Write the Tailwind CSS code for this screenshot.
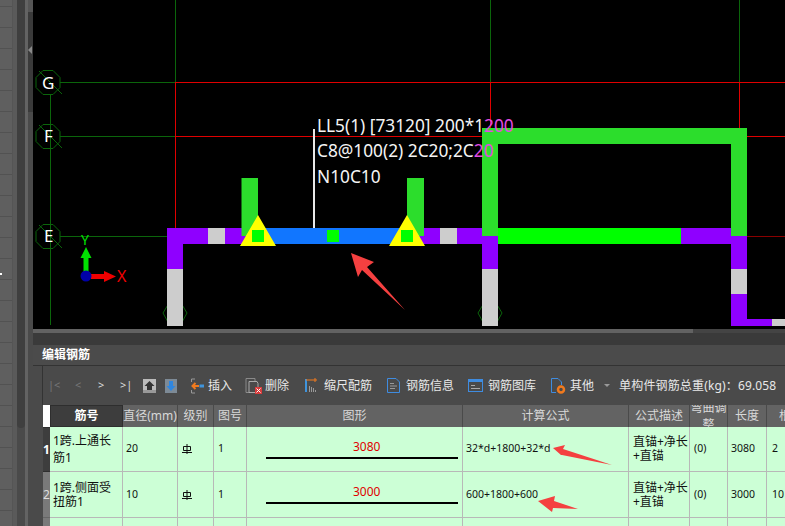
<!DOCTYPE html>
<html lang="en">

<head>
    <meta charset="UTF-8">
    <title>编辑钢筋</title>
    <script src="https://cdn.jsdelivr.net/npm/@tailwindcss/browser@4"></script>
</head>

<body class="bg-[#4a4a4a]">

    <div class="relative flex w-[785px] h-[526px] overflow-hidden font-['Noto_Sans','Noto_Sans_CJK_SC',sans-serif]">

        <!-- left dock -->
        <div class="flex w-[33px] shrink-0 h-full">
            <div class="relative w-[12px] bg-[#5f5f5f] bg-[linear-gradient(to_top,#525252_1px,transparent_1px)] bg-[size:100%_21px] bg-[position:0_7px]">
                <div class="absolute left-0 top-[273px] w-[2px] h-[2px] bg-white"></div>
            </div>
            <div class="w-[5px] bg-[#5a5a5a] border-l border-[#555]"></div>
            <div class="w-[8px] bg-[#4a4a4a]">
                <div class="h-[428px] rounded-b-[4px] bg-[#3f3f3f]"></div>
            </div>
            <div class="w-[3px] bg-[#636363]"></div>
            <div class="w-[5px] bg-[#4a4a4a] flex flex-col">
                <div class="h-[12px] bg-[#555]"></div>
                <div class="h-[100px] bg-[#3a3a3a] flex items-center">
                    <div class="w-0 h-0 border-y-[4px] border-y-transparent border-r-[4px] border-r-[#8a8a8a] mt-[-24px]"></div>
                </div>
            </div>
        </div>

        <div class="flex flex-col flex-1 min-w-0">

            <!-- drawing canvas -->
            <svg class="block shrink-0" width="752" height="329" viewBox="33 0 752 329" style="background:#000">
                <g stroke="#0b650b" stroke-width="1" fill="none">
                    <path d="M50.500 94V325M60 82.500H175.500M60 136.500H175.500M60 236.500H168M175.500 0V82M490.500 0V82M739.500 0V82" />
                    <path d="M43 70.500h10l7 7v10l-7 7H43l-7-7v-10zM39 71l23 23" />
                    <path d="M43 124.500h10l7 7v10l-7 7H43l-7-7v-10zM39 125l23 23" />
                    <path d="M43 224.500h10l7 7v10l-7 7H43l-7-7v-10zM39 225l23 23" />
                    <path d="M169 303h12l6 10-6 11h-12l-6-11zM484 303h12l6 10-6 11h-12l-6-11z" />
                </g>
                <path d="M175.500 82V228M490.500 82V128M739.500 82V128M175 82.500H785M175 136.500H482M747 136.500H785" stroke="#e00000" fill="none" />
                <path d="M747 236.500H785" stroke="#8a0000" fill="none" />

                <g fill="#fff" font-family="'Noto Sans',sans-serif" font-size="17">
                    <text x="42" y="89">G</text>
                    <text x="44" y="142">F</text>
                    <text x="44" y="242">E</text>
                </g>

                <!-- axis -->
                <path d="M83.500 258h5v18h-5zM86 247l5.500 11h-11z" fill="#00e000" />
                <path d="M91 274h13v5H91zM104 271l12 5.500-12 5.500z" fill="#f00000" />
                <circle cx="86" cy="276" r="5.500" fill="#0000a8" />
                <text x="81" y="245" fill="#00e000" font-family="'Noto Sans',sans-serif" font-size="14">Y</text>
                <text x="117" y="282" fill="#f00000" font-family="'Noto Sans',sans-serif" font-size="16">X</text>

                <!-- beams -->
                <path d="M167 228H482V244H183V269H167z" fill="#8f00ff" />
                <rect x="167" y="269" width="16" height="57" fill="#cdcdcd" />
                <rect x="208" y="228" width="17" height="16" fill="#cdcdcd" />
                <rect x="440" y="228" width="17" height="16" fill="#cdcdcd" />
                <rect x="258" y="228" width="149" height="16" fill="#1176ff" />
                <rect x="241.500" y="178" width="16.500" height="58" fill="#2cdd2c" />
                <rect x="407" y="178" width="17" height="58" fill="#2cdd2c" />
                <path d="M258 215l18 31h-36zM407 215l18 31h-36z" fill="#ffff00" />
                <path d="M252 230h12v12h-12zM327 230h12v12h-12zM401 230h12v12h-12z" fill="#00ff00" />
                <rect x="313" y="129" width="2" height="99" fill="#e8e8e8" />

                <path d="M482 236V128H747V236H731V144H498V236z" fill="#2cdd2c" />
                <rect x="498" y="228" width="183" height="16" fill="#00ff00" />
                <rect x="681" y="228" width="50" height="16" fill="#8f00ff" />
                <rect x="482" y="236" width="16" height="33" fill="#8f00ff" />
                <rect x="482" y="269" width="16" height="57" fill="#cdcdcd" />
                <rect x="731" y="236" width="16" height="33" fill="#8f00ff" />
                <rect x="731" y="269" width="16" height="25" fill="#cdcdcd" />
                <path d="M731 294h16v25h25v7h-41z" fill="#8f00ff" />
                <rect x="772" y="319" width="13" height="7" fill="#cdcdcd" />

                <!-- label -->
                <g fill="#f4f4f4" font-family="'Noto Sans',sans-serif" font-size="17.300">
                    <text x="317" y="132">LL5(1) [73120] 200*1<tspan fill="#e24be2">200</tspan></text>
                    <text x="317" y="157">C8@100(2) 2C20;2C<tspan fill="#e24be2">20</tspan></text>
                    <text x="317" y="183">N10C10</text>
                </g>

                <path d="M351 253l23 9-7 5 38 43-43-40-4 7z" fill="#f44040" />
            </svg>

            <!-- canvas scrollbar -->
            <div class="flex shrink-0 h-[4px] bg-[#444]">
                <div class="w-[660px] bg-[#626262]"></div>
            </div>
            <div class="h-[12px] shrink-0 bg-[#3a3a3a]"></div>

            <!-- rebar editor -->
            <div class="flex items-center shrink-0 h-[21px] pl-[9px] border-b border-[#333] bg-[#4b4b4b] text-[12px] font-bold text-white">编辑钢筋</div>

            <div class="flex-1 min-h-0 pl-[9px]">
                <div class="flex items-center h-[39px] border-l border-[#333] text-[12px] whitespace-nowrap text-[#e8e8e8] [&>*]:shrink-0">
                    <span class="ml-[5px] w-[27px] text-[#777] text-[11px]">|&lt;</span>
                    <span class="w-[23px] text-[#777] text-[11px]">&lt;</span>
                    <span class="w-[22px] text-[#ddd] text-[11px]">&gt;</span>
                    <span class="w-[23px] text-[#ddd] text-[11px]">&gt;|</span>
                    <svg width="13" height="14" viewBox="0 0 13 14"><rect width="13" height="14" fill="#bbb" /><rect y="11" width="13" height="3" fill="#999" /><path d="M6.500 2l5 5H9v4H4V7H1.500z" fill="#333" /></svg>
                    <svg class="ml-[9px]" width="12" height="14" viewBox="0 0 12 14"><rect width="12" height="14" fill="#7d8a96" /><path d="M4 2h4v5h2.500L6 12 1.500 7H4z" fill="#2f86df" /></svg>
                    <svg class="ml-[13px]" width="14" height="16" viewBox="0 0 14 16" fill="none"><path d="M5 1H1.500M5 15H1.500M1.500 1v3M1.500 12v3" stroke="#999" /><path d="M9 8H3M5.500 5L2.500 8l3 3" stroke="#f07a1e" stroke-width="2" /><rect x="9.500" y="6.500" width="4.500" height="3" fill="#3f94dc" /></svg>
                    <span class="ml-[4px]">插入</span>
                    <svg class="ml-[13px]" width="17" height="16" viewBox="0 0 17 16" fill="none"><path d="M1 .500h9v14H1z" stroke="#8a8a8a" /><path d="M4 3.500h8l1 2v9H4z" stroke="#aaa" fill="#4a4a4a" /><rect x="10" y="9" width="7" height="7" fill="#d83c3c" /><path d="M11.500 10.500l4 4M15.500 10.500l-4 4" stroke="#fff" /></svg>
                    <span class="ml-[3px]">删除</span>
                    <svg class="ml-[16px]" width="13" height="15" viewBox="0 0 13 15" fill="none"><path d="M1 1v13" stroke="#3f94dc" stroke-width="2" /><path d="M1 2h11" stroke="#f07a1e" /><path d="M10 0v4" stroke="#f07a1e" /><path d="M4.500 8v6M6.500 9v5M8.500 10v4M10.500 12v2" stroke="#999" /></svg>
                    <span class="ml-[6px]">缩尺配筋</span>
                    <svg class="ml-[15px]" width="13" height="15" viewBox="0 0 13 15" fill="none"><path d="M.500.500H9l3.500 3.500v10.500h-12z" stroke="#3f8ce0" /><path d="M3 5.500h4M3 8h7M3 10.500h5" stroke="#999" /></svg>
                    <span class="ml-[6px]">钢筋信息</span>
                    <svg class="ml-[14px]" width="15" height="13" viewBox="0 0 15 13" fill="none"><rect x=".500" y=".500" width="14" height="12" stroke="#3f8ce0" /><rect x="1" y="1" width="13" height="2" fill="#3f8ce0" /><path d="M3 6.500h4M3 9.500h9" stroke="#aaa" /></svg>
                    <span class="ml-[5px]">钢筋图库</span>
                    <svg class="ml-[15px]" width="15" height="16" viewBox="0 0 15 16" fill="none"><path d="M.500 14.500V.500H7l3.500 3.500v3" stroke="#3f8ce0" /><path d="M.500 14.500H5" stroke="#3f8ce0" /><circle cx="10" cy="11.500" r="3" stroke="#f07a1e" stroke-width="2.500" /></svg>
                    <span class="ml-[4px]">其他</span>
                    <span class="ml-[10px] w-0 h-0 border-x-[3px] border-x-transparent border-t-[3px] border-t-[#999]"></span>
                    <span class="ml-[9px] tracking-[0.15px]">单构件钢筋总重(kg)：69.058</span>
                </div>

                <div class="grid ml-[1px] w-[760px] grid-cols-[7px_73px_55px_36px_33px_216px_166px_61px_38px_39px_35px] grid-rows-[22px_45px_46px_46px] text-[12px] text-[#111]">
                    <!-- header -->
                    <div class="bg-white"></div>
                    <div class="flex items-center justify-center bg-[#3d3d3d] border border-[#2e2e2e] font-bold text-white">筋号</div>
                    <div class="flex items-center justify-center whitespace-nowrap bg-[#636363] border-r border-[#4a4a4a] text-[#d8d8d8]">直径(mm)</div>
                    <div class="flex items-center justify-center bg-[#636363] border-r border-[#4a4a4a] text-[#d8d8d8]">级别</div>
                    <div class="flex items-center justify-center bg-[#636363] border-r border-[#4a4a4a] text-[#d8d8d8]">图号</div>
                    <div class="flex items-center justify-center bg-[#636363] border-r border-[#4a4a4a] text-[#d8d8d8]">图形</div>
                    <div class="flex items-center justify-center bg-[#636363] border-r border-[#4a4a4a] text-[#d8d8d8]">计算公式</div>
                    <div class="flex items-center justify-center bg-[#636363] border-r border-[#4a4a4a] text-[#d8d8d8]">公式描述</div>
                    <div class="overflow-hidden text-center bg-[#636363] border-r border-[#4a4a4a] leading-[17px] text-[#d8d8d8]"><div class="mt-[-6px]">弯曲调<br>整</div></div>
                    <div class="flex items-center justify-center bg-[#636363] border-r border-[#4a4a4a] text-[#d8d8d8]">长度</div>
                    <div class="flex items-center pl-[12px] whitespace-nowrap bg-[#636363] text-[#d8d8d8]">根数</div>

                    <!-- row 1 -->
                    <div class="flex items-center justify-center bg-[#3d3d3d] border-y border-[#2e2e2e] font-bold text-white">1</div>
                    <div class="flex items-center pl-[3px] bg-[#ccffd6] border-r border-b border-[#b8b8b8] leading-[17px]">1跨.上通长筋1</div>
                    <div class="flex items-center pl-[3px] bg-[#ccffd6] border-r border-b border-[#b8b8b8] text-[10.500px]">20</div>
                    <div class="flex items-center pl-[4px] bg-[#ccffd6] border-r border-b border-[#b8b8b8]">
                        <svg width="10" height="10" viewBox="0 0 10 10" fill="none" stroke="#111"><path d="M5 0v10M1.500 2.500h7v4h-7zM0 8.500h10" /></svg>
                    </div>
                    <div class="flex items-center pl-[4px] bg-[#ccffd6] border-r border-b border-[#b8b8b8] text-[10.500px]">1</div>
                    <div class="flex flex-col items-stretch pt-[12px] pl-[19px] pr-[4px] bg-[#ccffd6] border-r border-b border-[#b8b8b8]">
                        <span class="ml-[87px] h-[18px] text-[12px] leading-[16px] text-[#e00000]">3080</span>
                        <span class="h-[2px] bg-black"></span>
                    </div>
                    <div class="flex items-center pl-[3px] bg-[#ccffd6] border-r border-b border-[#b8b8b8] text-[10.500px]">32*d+1800+32*d</div>
                    <div class="flex items-center pl-[4px] bg-[#ccffd6] border-r border-b border-[#b8b8b8] leading-[14px]"><span>直锚+净长<br>+直锚</span></div>
                    <div class="flex items-center pl-[4px] bg-[#ccffd6] border-r border-b border-[#b8b8b8] text-[10.500px]">(0)</div>
                    <div class="flex items-center pl-[3px] bg-[#ccffd6] border-r border-b border-[#b8b8b8] text-[10.500px]">3080</div>
                    <div class="flex items-center pl-[5px] bg-[#ccffd6] border-b border-[#b8b8b8] text-[10.500px]">2</div>

                    <!-- row 2 -->
                    <div class="flex items-center justify-center bg-[#7a7a7a] border-b border-[#666] text-[#ddd]">2</div>
                    <div class="flex items-center pl-[3px] bg-[#ccffd6] border-r border-b border-[#b8b8b8] leading-[14px]">1跨.侧面受扭筋1</div>
                    <div class="flex items-center pl-[3px] bg-[#ccffd6] border-r border-b border-[#b8b8b8] text-[10.500px]">10</div>
                    <div class="flex items-center pl-[4px] bg-[#ccffd6] border-r border-b border-[#b8b8b8]">
                        <svg width="10" height="10" viewBox="0 0 10 10" fill="none" stroke="#111"><path d="M5 0v10M1.500 2.500h7v4h-7zM0 8.500h10" /></svg>
                    </div>
                    <div class="flex items-center pl-[4px] bg-[#ccffd6] border-r border-b border-[#b8b8b8] text-[10.500px]">1</div>
                    <div class="flex flex-col items-stretch pt-[12px] pl-[19px] pr-[4px] bg-[#ccffd6] border-r border-b border-[#b8b8b8]">
                        <span class="ml-[87px] h-[18px] text-[12px] leading-[16px] text-[#e00000]">3000</span>
                        <span class="h-[2px] bg-black"></span>
                    </div>
                    <div class="flex items-center pl-[3px] bg-[#ccffd6] border-r border-b border-[#b8b8b8] text-[10.500px]">600+1800+600</div>
                    <div class="flex items-center pl-[4px] bg-[#ccffd6] border-r border-b border-[#b8b8b8] leading-[14px]"><span>直锚+净长<br>+直锚</span></div>
                    <div class="flex items-center pl-[4px] bg-[#ccffd6] border-r border-b border-[#b8b8b8] text-[10.500px]">(0)</div>
                    <div class="flex items-center pl-[3px] bg-[#ccffd6] border-r border-b border-[#b8b8b8] text-[10.500px]">3000</div>
                    <div class="flex items-center pl-[5px] bg-[#ccffd6] border-b border-[#b8b8b8] text-[10.500px]">10</div>

                    <!-- row 3, cut off by the window -->
                    <div class="bg-[#7a7a7a]"></div>
                    <div class="bg-[#ccffd6] border-r border-[#b8b8b8]"></div>
                    <div class="bg-[#ccffd6] border-r border-[#b8b8b8]"></div>
                    <div class="bg-[#ccffd6] border-r border-[#b8b8b8]"></div>
                    <div class="bg-[#ccffd6] border-r border-[#b8b8b8]"></div>
                    <div class="bg-[#ccffd6] border-r border-[#b8b8b8]"></div>
                    <div class="bg-[#ccffd6] border-r border-[#b8b8b8]"></div>
                    <div class="bg-[#ccffd6] border-r border-[#b8b8b8]"></div>
                    <div class="bg-[#ccffd6] border-r border-[#b8b8b8]"></div>
                    <div class="bg-[#ccffd6] border-r border-[#b8b8b8]"></div>
                    <div class="bg-[#ccffd6]"></div>
                </div>
            </div>
        </div>

        <!-- annotation arrows drawn over the table -->
        <svg class="absolute left-0 top-0 pointer-events-none" width="785" height="526" viewBox="0 0 785 526">
            <path d="M553 448l12-3-2 4 49 16-50-10-1 0z" fill="#f44040" />
            <path d="M538 501l17-5-1 5 24 8-25-1-1 4z" fill="#f44040" />
        </svg>
    </div>

</body>

</html>
